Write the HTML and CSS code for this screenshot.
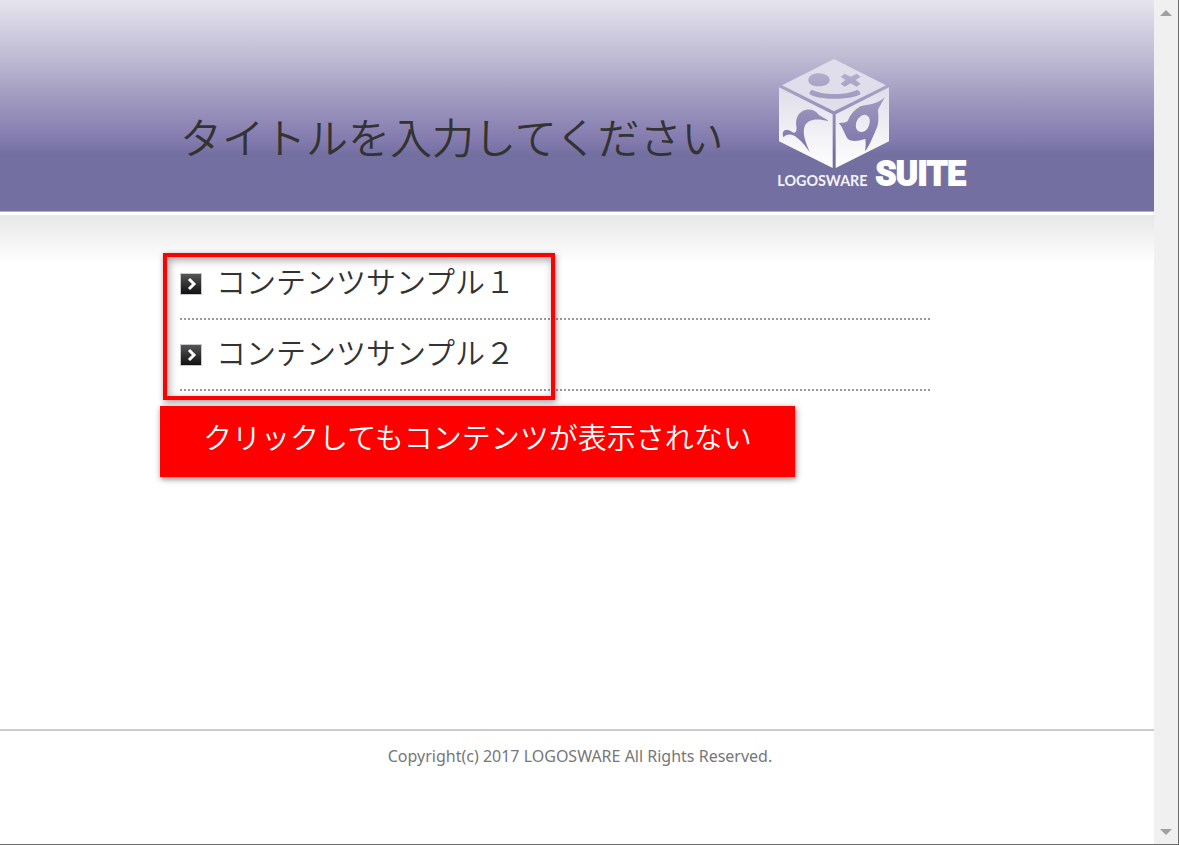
FILE: index.html
```html
<!DOCTYPE html>
<html lang="ja">
<head>
<meta charset="utf-8">
<title>LOGOSWARE SUITE</title>
<link rel="stylesheet" href="styles.css">
</head>
<body>
<div class="page">
  <header class="header">
    <div class="container header-inner">
      <h1 class="title">タイトルを入力してください</h1>
      <svg class="logo" viewBox="51 24 576 396" role="img" aria-label="LOGOSWARE SUITE">
        <defs>
          <linearGradient id="face" gradientUnits="userSpaceOnUse" x1="0" y1="110" x2="0" y2="355">
            <stop offset="0" stop-color="#dfdde9"/>
            <stop offset="1" stop-color="#ffffff"/>
          </linearGradient>
        </defs>
        <path fill="#e0deea" fill-rule="evenodd" d="M222 27 378 106 222 184 66 106ZM177 70C158 70 145 78 145 90S158 109 177 109 209 101 209 90 196 70 177 70ZM242 80 254 71 272 80 290 71 302 80 287 90 302 101 290 110 272 100 254 110 242 101 256 90ZM156 119C148 124 148 127 149 133 175 151 272 151 301 133 302 128 300 124 292 119 263 136 185 136 156 119Z"/>
        <path fill="url(#face)" fill-rule="evenodd" d="M57 112 218 193V354L57 274ZM69 246C68 254 68 258 71 262 79 250 98 251 111 263 128 275 138 290 149 306 137 277 126 252 134 229 141 208 171 203 205 214 202 206 188 205 174 192 166 180 151 176 136 180 116 185 105 205 109 229 111 241 108 249 101 248 90 242 77 232 69 246Z"/>
        <path fill="url(#face)" fill-rule="evenodd" d="M387 112 227 193V354L387 274ZM374 142C350 164 326 163 301 169 284 179 271 193 263 213 254 220 246 218 236 219 249 231 251 248 263 266 276 278 302 271 316 267 318 281 317 292 315 304 329 287 341 254 352 230 357 212 355 193 354 179 360 166 369 154 374 142ZM318 195C331 199 333 216 324 233 315 247 300 250 292 241 284 231 287 213 297 203 304 196 311 193 318 195Z"/>
        <text class="logo-name" x="52" y="407">LOGOSWARE</text>
        <text class="logo-suite" x="347" y="404">SUITE</text>
      </svg>
    </div>
  </header>

  <main class="main">
    <div class="container">
      <div class="content">
        <ul class="list">
          <li class="item"><a class="link" href="#sample1">
            <svg class="bullet" viewBox="0 0 22 22" aria-hidden="true"><defs><linearGradient id="dark" x2="0" y2="1"><stop stop-color="#555"/><stop offset="1" stop-color="#111"/></linearGradient></defs><path fill="#c5c9cc" d="M0 0h22v22H0z"/><path fill="url(#dark)" d="M1 1h20v20H1z"/><path fill="none" stroke="#fff" stroke-width="3" d="m9 6 5 5-5 5"/></svg>
            コンテンツサンプル１</a></li>
          <li class="item"><a class="link" href="#sample2">
            <svg class="bullet" viewBox="0 0 22 22" aria-hidden="true"><path fill="#c5c9cc" d="M0 0h22v22H0z"/><path fill="url(#dark)" d="M1 1h20v20H1z"/><path fill="none" stroke="#fff" stroke-width="3" d="m9 6 5 5-5 5"/></svg>
            コンテンツサンプル２</a></li>
        </ul>
        <div class="frame"></div>
        <p class="callout">クリックしてもコンテンツが表示されない</p>
      </div>
    </div>
  </main>

  <footer class="footer">Copyright(c) 2017 LOGOSWARE All Rights Reserved.</footer>
</div>
<div class="scrollbar" aria-hidden="true">
  <svg class="arrow" viewBox="0 0 12 6"><path d="M0 6 6 0 12 6z"/></svg>
  <svg class="arrow" viewBox="0 0 12 6"><path d="M0 0 6 6 12 0z"/></svg>
</div>
</body>
</html>
```
FILE: styles.css
```css
* {
  box-sizing: border-box;
}

body {
  display: flex;
  min-height: 100vh;
  margin: 0;
  border-right: 1px solid #6b6b6b;
  border-bottom: 1px solid #6b6b6b;
  background: #fff;
  color: #333;
  font-family: "Noto Sans CJK JP", sans-serif;
  font-weight: 350;
}

.page {
  display: flex;
  flex: 1;
  flex-direction: column;
}

.container {
  width: 100%;
  max-width: 794px;
  margin: 0 auto;
}

.header {
  padding: 58px 0 21px;
  border-bottom: 1px solid #b0abd0;
  background: linear-gradient(#e6e4ee 0, #bdb9d2 60px, #9f99bf 100px, #8279ad 142px, #746fa1 154px);
}

.header-inner {
  display: flex;
  align-items: center;
  justify-content: space-between;
}

.title {
  margin: 0;
  padding-top: 24px;
  font-size: 42px;
  font-weight: 350;
  line-height: 60px;
}

.logo {
  width: 192px;
  height: 132px;
  margin-right: 5px;
  overflow: visible;
}

.logo-name {
  fill: #f4f3f8;
  font: 700 43px Lato, sans-serif;
}

.logo-suite {
  fill: #fff;
  stroke: #fff;
  stroke-width: 6px;
  font: 700 99px Roboto, sans-serif;
}

.main {
  flex: 1;
  padding-top: 34px;
  border-top: 3px solid #fff;
  background: linear-gradient(#e7e7e7, #fff 48px);
}

.content {
  position: relative;
  max-width: 750px;
}

.list {
  margin: 0;
  padding: 0;
  list-style: none;
}

.item {
  height: 71px;
  padding-top: 6px;
  border-bottom: 2px dotted #999;
}

.link {
  display: flex;
  align-items: center;
  gap: 14px;
  color: #333;
  font-size: 30px;
  line-height: 50px;
  text-decoration: none;
}

.bullet {
  width: 22px;
  height: 22px;
  margin-top: 8px;
}

.frame {
  position: absolute;
  top: 4px;
  left: -17px;
  width: 392px;
  height: 147px;
  border: 4px solid #f00;
  box-shadow: 1px 2px 6px rgba(0, 0, 0, 0.4), inset 2px 3px 8px rgba(0, 0, 0, 0.35);
  pointer-events: none;
}

.callout {
  position: absolute;
  top: 157px;
  left: -20px;
  width: 635px;
  height: 71px;
  margin: 0;
  padding-left: 43px;
  background: #f00;
  box-shadow: 1px 2px 6px rgba(0, 0, 0, 0.5);
  color: #fff;
  font-size: 29px;
  line-height: 60px;
}

.footer {
  height: 115px;
  padding: 15px 0 0 6px;
  border-top: 2px solid #ccc;
  color: #777;
  font-family: "Noto Sans", sans-serif;
  font-size: 16px;
  font-weight: 400;
  line-height: 20px;
  text-align: center;
}

.scrollbar {
  display: flex;
  flex-direction: column;
  align-items: center;
  justify-content: space-between;
  width: 24px;
  padding: 10px 0 9px;
  background: #f0f0f0;
}

.arrow {
  width: 12px;
  height: 6px;
  fill: #a0a0a0;
}
```
